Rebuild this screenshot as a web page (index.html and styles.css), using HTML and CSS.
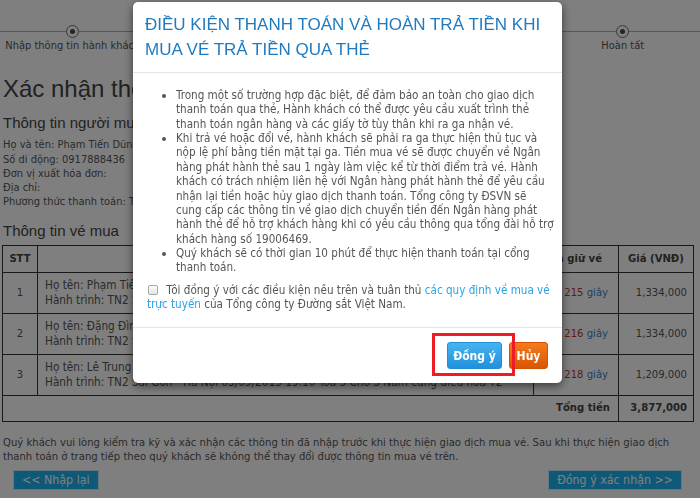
FILE: index.html
```html
<!DOCTYPE html>
<html lang="vi">
<head>
<meta charset="utf-8">
<title>Xác nhận thông tin đặt mua vé</title>
<link rel="stylesheet" href="styles.css">
</head>
<body>
<div class="steps">
  <div class="step"><span class="dot"></span><span class="step-label">Nhập thông tin hành khách</span></div>
  <div class="step"><span class="dot"></span><span class="step-label">Xác nhận</span></div>
  <div class="step"><span class="dot"></span><span class="step-label">Thanh toán</span></div>
  <div class="step"><span class="dot"></span><span class="step-label">Kiểm tra</span></div>
  <div class="step"><span class="dot"></span><span class="step-label">Hoàn tất</span></div>
</div>

<div class="page">
  <h1 class="page-title">Xác nhận thông tin đặt mua vé tàu</h1>

  <h2 class="section-title">Thông tin người mua vé</h2>
  <div class="buyer">
    <div>Họ và tên: Phạm Tiến Dũng</div>
    <div>Số di động: 0917888436</div>
    <div>Đơn vị xuất hóa đơn:</div>
    <div>Địa chỉ:</div>
    <div>Phương thức thanh toán: Thanh toán trực tuyến qua thẻ quốc tế</div>
  </div>

  <h2 class="section-title tickets-title">Thông tin vé mua</h2>
  <table class="tickets">
    <colgroup>
      <col class="c-stt"><col class="c-info"><col class="c-time"><col class="c-price">
    </colgroup>
    <thead>
      <tr><th>STT</th><th>Thông tin vé</th><th class="th-time"><span class="th-time-text">Thời gian giữ vé</span></th><th>Giá (VNĐ)</th></tr>
    </thead>
    <tbody>
      <tr>
        <td class="num">1</td>
        <td class="info">Họ tên: Phạm Tiến Dũng - Người lớn - Số giấy tờ: 025123456<br>Hành trình: TN2 Sài Gòn - Hà Nội 05/09/2015 19:10 Toa 5 Chỗ 1 Nằm cứng điều hòa T2</td>
        <td class="time"><span class="sec">215</span> <span class="unit">giây</span></td>
        <td class="price">1,334,000</td>
      </tr>
      <tr>
        <td class="num">2</td>
        <td class="info">Họ tên: Đặng Đình Khoa - Người lớn - Số giấy tờ: 025654321<br>Hành trình: TN2 Sài Gòn - Hà Nội 05/09/2015 19:10 Toa 5 Chỗ 2 Nằm cứng điều hòa T2</td>
        <td class="time"><span class="sec">216</span> <span class="unit">giây</span></td>
        <td class="price">1,334,000</td>
      </tr>
      <tr>
        <td class="num">3</td>
        <td class="info">Họ tên: Lê Trung Hiếu - Người lớn - Số giấy tờ: 025987654<br>Hành trình: TN2 Sài Gòn - Hà Nội 05/09/2015 19:10 Toa 5 Chỗ 3 Nằm cứng điều hòa T2</td>
        <td class="time"><span class="sec">218</span> <span class="unit">giây</span></td>
        <td class="price">1,209,000</td>
      </tr>
      <tr class="total">
        <td colspan="3" class="total-label">Tổng tiền</td>
        <td class="price">3,877,000</td>
      </tr>
    </tbody>
  </table>

  <p class="note">Quý khách vui lòng kiểm tra kỹ và xác nhận các thông tin đã nhập trước khi thực hiện giao dịch mua vé. Sau khi thực hiện giao dịch thanh toán ở trang tiếp theo quý khách sẽ không thể thay đổi được thông tin mua vé trên.</p>

  <div class="actions">
    <button class="page-btn">&lt;&lt; Nhập lại</button>
    <button class="page-btn">Đồng ý xác nhận &gt;&gt;</button>
  </div>
</div>

<div class="backdrop"></div>

<div class="modal">
  <div class="modal-header">
    <h3 class="modal-title">ĐIỀU KIỆN THANH TOÁN VÀ HOÀN TRẢ TIỀN KHI MUA VÉ TRẢ TIỀN QUA THẺ</h3>
  </div>
  <div class="modal-body">
    <ul class="terms">
      <li>Trong một số trường hợp đặc biệt, để đảm bảo an toàn cho giao dịch thanh toán qua thẻ, Hành khách có thể được yêu cầu xuất trình thẻ thanh toán ngân hàng và các giấy tờ tùy thân khi ra ga nhận vé.</li>
      <li>Khi trả vé hoặc đổi vé, hành khách sẽ phải ra ga thực hiện thủ tục và nộp lệ phí bằng tiền mặt tại ga. Tiền mua vé sẽ được chuyển về Ngân hàng phát hành thẻ sau 1 ngày làm việc kể từ thời điểm trả vé. Hành khách có trách nhiệm liên hệ với Ngân hàng phát hành thẻ để yêu cầu nhận lại tiền hoặc hủy giao dịch thanh toán. Tổng công ty ĐSVN sẽ cung cấp các thông tin về giao dịch chuyển tiền đến Ngân hàng phát hành thẻ để hỗ trợ khách hàng khi có yêu cầu thông qua tổng đài hỗ trợ khách hàng số 19006469.</li>
      <li>Quý khách sẽ có thời gian 10 phút để thực hiện thanh toán tại cổng thanh toán.</li>
    </ul>
    <p class="agree"><input type="checkbox" class="check"> Tôi đồng ý với các điều kiện nêu trên và tuân thủ <a class="link" href="#">các quy định về mua vé trực tuyến</a> của Tổng công ty Đường sắt Việt Nam.</p>
  </div>
  <div class="modal-footer">
    <button class="btn btn-ok">Đồng ý</button>
    <button class="btn btn-cancel">Hủy</button>
  </div>
  <div class="highlight"></div>
</div>
</body>
</html>
```
FILE: styles.css
```css
* { box-sizing: border-box; }

html, body { margin: 0; padding: 0; }

body {
  width: 700px;
  height: 498px;
  overflow: hidden;
  background: #fff;
  font-family: "DejaVu Sans Condensed", "DejaVu Sans", sans-serif;
  font-stretch: condensed;
  font-size: 11.2px;
  line-height: 14.3px;
  color: #555;
}

/* steps */
.steps {
  display: grid;
  grid-template-columns: repeat(5, 137.5px);
  padding: 25px 0 0 4px;
  background: linear-gradient(#b0b0b0, #b0b0b0) no-repeat 0 31px / 100% 1px;
}
.step {
  display: flex;
  flex-direction: column;
  align-items: center;
}
.dot {
  width: 13px;
  height: 13px;
  border-radius: 50%;
  border: 1px solid #707070;
  background: #fff;
  display: flex;
  align-items: center;
  justify-content: center;
}
.dot::after {
  content: "";
  width: 5px;
  height: 5px;
  border-radius: 50%;
  background: #4a4a4a;
}
.step-label {
  margin-top: 1px;
  white-space: nowrap;
  font-size: 11px;
  color: #555;
}

/* page */
.page { padding: 0 7px 0 2px; }

.page-title {
  margin: 22px 0 0 1px;
  font: 24px/28px "Liberation Sans", Arial, sans-serif;
  color: #444;
  white-space: nowrap;
}
.section-title {
  margin: 11px 0 0 1px;
  font: 15px/18px "Liberation Sans", Arial, sans-serif;
  color: #444;
  font-weight: normal;
}
.buyer { margin: 6px 0 0 1px; font-size: 11px; }
.tickets-title { margin-top: 12px; }

.tickets {
  margin-top: 5px;
  width: 691px;
  table-layout: fixed;
  border-collapse: collapse;
}
.c-stt { width: 35px; }
.c-info { width: 496px; }
.c-time { width: 85px; }
.c-price { width: 75px; }

.tickets th, .tickets td {
  border: 1px solid #333;
  padding: 0;
}
.tickets th {
  height: 27px;
  font-weight: bold;
  color: #444;
  text-align: center;
  white-space: nowrap;
}
.tickets th.th-time { text-align: right; padding-right: 16px; }
.th-time-text { display: inline-block; margin-left: -45px; }
.tickets td { height: 41px; vertical-align: middle; }
.tickets .num { text-align: center; }
.tickets .info { padding-left: 7px; white-space: nowrap; overflow: hidden; font-size: 11.7px; }
.tickets .time { text-align: right; padding-right: 10px; }
.sec { color: #c62f2f; }
.unit { color: #3a82c4; }
.tickets .price { text-align: right; padding-right: 6px; }
.tickets .total td { height: 26px; font-weight: bold; color: #444; }
.tickets .total-label { text-align: right; padding-right: 8px; }

.note { margin: 14px 0 0 1px; }

.actions {
  margin-top: 6px;
  display: flex;
  justify-content: space-between;
  padding: 0 11px;
}
.page-btn {
  height: 20px;
  padding: 0 8px;
  border: 1px solid #cdeefb;
  background: #1cb2ee;
  color: #fff;
  font-family: "DejaVu Sans Condensed", "DejaVu Sans", sans-serif;
  font-stretch: condensed;
  font-size: 12.3px;
  line-height: 18px;
}

/* modal */
.backdrop {
  position: fixed;
  inset: 0;
  background: rgba(0, 0, 0, 0.5);
}
.modal {
  position: fixed;
  left: 133px;
  top: 2px;
  width: 429px;
  background: #fff;
  border-radius: 5px;
  box-shadow: 0 3px 10px rgba(0, 0, 0, 0.55);
}
.modal-header {
  padding: 10px 12px;
  border-bottom: 1px solid #e5e5e5;
}
.modal-title {
  margin: 0;
  font: 17px/25px "Liberation Sans", Arial, sans-serif;
  color: #1f7bbf;
}
.modal-body {
  padding: 15px 7.9px 16px 14px;
  font-size: 11.6px;
  line-height: 14.36px;
}
.terms {
  margin: 0 0 8px;
  padding-left: 29px;
}
.agree { margin: 0; }
.check {
  appearance: none;
  -webkit-appearance: none;
  width: 10px;
  height: 10px;
  margin: 0 5px 0 1px;
  vertical-align: -1px;
  border: 1px solid #a8a8a8;
  border-radius: 2px;
  background: linear-gradient(#fdfdfd, #e4e4e4);
}
.link { color: #2aa2e4; text-decoration: none; }

.modal-footer {
  border-top: 1px solid #e5e5e5;
  padding: 14px;
  display: flex;
  justify-content: flex-end;
  gap: 7px;
}
.btn {
  height: 27px;
  border-radius: 3px;
  font-family: "DejaVu Sans Condensed", "DejaVu Sans", sans-serif;
  font-stretch: condensed;
  font-size: 12px;
  font-weight: bold;
  color: #fff;
  padding: 0;
  white-space: nowrap;
}
.btn-ok {
  width: 55px;
  border: 1px solid #1f8fd6;
  background: linear-gradient(#48b3ee, #1f91dd);
}
.btn-cancel {
  width: 39px;
  border: 1px solid #d25300;
  background: linear-gradient(#f57a1d, #d85700);
}
.highlight {
  position: absolute;
  left: 299px;
  top: 331px;
  width: 83px;
  height: 43px;
  border: 3px solid #ee1c24;
}
```
